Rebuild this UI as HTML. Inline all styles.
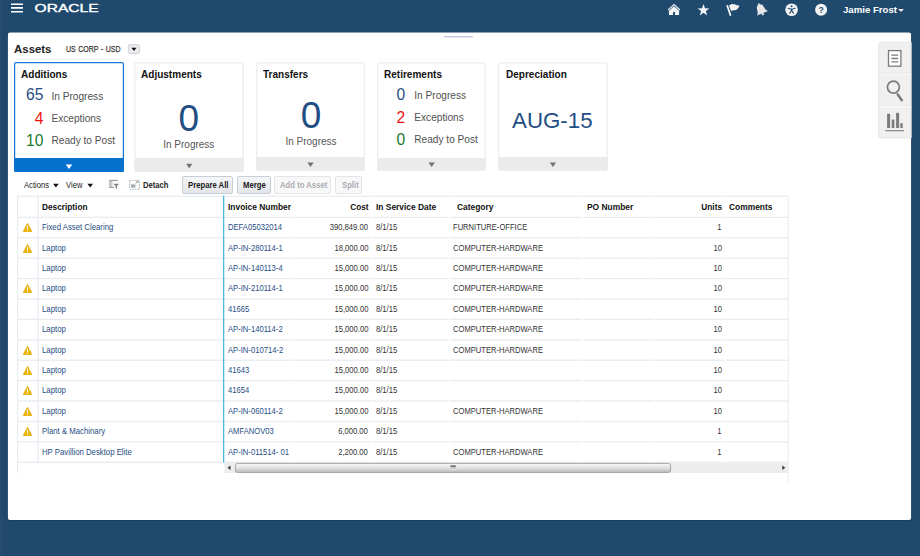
<!DOCTYPE html>
<html lang="en"><head><meta charset="utf-8"><title>Assets</title>
<style>
html,body{margin:0;padding:0;}
body{width:920px;height:556px;overflow:hidden;background:#1f4a6e;font-family:"Liberation Sans",sans-serif;position:relative;}
.b{position:absolute;display:block;}
.t{position:absolute;white-space:nowrap;}
</style></head><body>
<div class="b " style="left:0px;top:0px;width:1.5px;height:556px;background:#274c70;"></div>
<svg class="b" style="left:8px;top:0;width:20px;height:16px" viewBox="8 0 20 16"><path d="M11 3.4 H23 V5.1 H11 Z M11 7 H23 V8.7 H11 Z M11 10.9 H23 V12.6 H11 Z" fill="#fff"/></svg>
<svg class="b" style="left:30px;top:0;width:80px;height:16px" viewBox="0 0 80 16"><text x="4.6" y="11.5" font-family="Liberation Sans, sans-serif" font-size="11.2" fill="#fff" stroke="#fff" stroke-width="0.35" textLength="64" lengthAdjust="spacingAndGlyphs">ORACLE</text><text x="69" y="6" font-family="Liberation Sans, sans-serif" font-size="2.5" fill="#fff">®</text></svg>

<svg class="b" style="left:666.2px;top:2px;width:16px;height:16px" viewBox="0 0 16 16"><path d="M8 1.7 L14.3 7.6 L13.6 8.4 L8 3.2 L2.4 8.4 L1.7 7.6 Z" fill="#f2f4f6"/><path d="M2.9 8.8 L8 4.2 L13.1 8.8 V13 H9 V9.9 H7.1 V13 H2.9 Z" fill="#f2f4f6"/></svg>
<svg class="b" style="left:696px;top:2px;width:16px;height:16px" viewBox="0 0 16 16"><path d="M7.5 2.1 L9 6.3 L13.4 6.4 L9.9 9.1 L11.2 13.4 L7.5 10.8 L3.8 13.4 L5.1 9.1 L1.6 6.4 L6 6.3 Z" fill="#f2f4f6"/></svg>
<svg class="b" style="left:720px;top:0px;width:56px;height:20px" viewBox="720 0 56 20"><path d="M726.3 5.6 L727.9 5.0 L731.4 15.6 L729.8 16.1 Z" fill="#fff"/><path d="M729 5.6 C730.8 3.6 733.6 3.5 735.3 4.5 C736.8 5.4 738.3 5.8 739.5 5.5 C738.8 7.6 737.7 9.4 736 10 C734.4 10.6 732.8 9.9 731.2 11.3 Z" fill="#f4f4f4"/><g transform="translate(762.5,13.3) rotate(-22)"><circle cx="0" cy="-9.6" r="1" fill="#e6e6e6"/><path d="M0 -9.4 C2.9 -9.4 3.6 -6.8 3.8 -4.4 C4 -2 4.8 -1 6 0 L-6 0 C-4.8 -1 -4 -2 -3.8 -4.4 C-3.6 -6.8 -2.9 -9.4 0 -9.4 Z" fill="#e6e6e6"/><circle cx="0" cy="0.9" r="1.2" fill="#e6e6e6"/></g></svg>
<svg class="b" style="left:778px;top:0px;width:56px;height:20px" viewBox="778 0 56 20"><circle cx="791.6" cy="9.7" r="6.3" fill="#f1f3f5"/><circle cx="791.6" cy="6.3" r="0.95" fill="#1f4a6e"/><path d="M788.2 8.3 L791.6 9.5 L795 8.3" fill="none" stroke="#1f4a6e" stroke-width="1.15" stroke-linecap="round"/><path d="M791.6 9.2 V10.8 M789.7 13.3 L791.6 10.2 L793.5 13.3" fill="none" stroke="#1f4a6e" stroke-width="1.2" stroke-linecap="round" stroke-linejoin="round"/><circle cx="821.1" cy="9.8" r="6" fill="#f1f3f5"/><text x="821.1" y="12.9" text-anchor="middle" font-family="Liberation Sans, sans-serif" font-weight="700" font-size="8.6" fill="#1f4a6e">?</text></svg>

<div class="t " style="top:4px;font-size:9.65px;line-height:11px;color:#fff;font-weight:700;left:843px;">Jamie Frost</div>
<div class="b" style="left:898px;top:9.2px;width:0;height:0;border-left:3px solid transparent;border-right:3px solid transparent;border-top:3px solid #e8e8e8"></div>
<svg class="b" style="left:0;top:0;width:920px;height:556px" viewBox="0 0 920 556"><rect x="7.3" y="32" width="904.4" height="488.7" rx="2.4" fill="#173f64"/><rect x="7.9" y="32.6" width="903.2" height="487.5" rx="2" fill="#fff"/></svg>
<svg class="b" style="left:440px;top:33px;width:40px;height:8px" viewBox="440 33 40 8"><rect x="444.2" y="35.9" width="28.7" height="1.6" rx="0.5" fill="#c4cadc"/></svg>
<div class="t " style="top:43px;font-size:11.4px;line-height:12px;color:#222;font-weight:700;left:14.1px;">Assets</div>
<div class="t " style="top:44px;font-size:9px;line-height:10px;color:#3a3a3a;left:66.1px;transform:scaleX(0.775);transform-origin:left center;-webkit-text-stroke:0.25px #3a3a3a;word-spacing:0.8px;">US CORP - USD</div>
<svg class="b" style="left:120px;top:40px;width:30px;height:20px" viewBox="120 40 30 20"><rect x="128.3" y="44.6" width="11.3" height="8.9" rx="1.8" fill="#e9ebee" stroke="#c9ced4" stroke-width="0.9"/><path d="M131.4 47.7 H136.5 L133.95 50.9 Z" fill="#0a0a0a"/></svg>
<svg class="b" style="left:0;top:56px;width:620px;height:120px" viewBox="0 56 620 120"><rect x="14.6" y="62.67" width="108.8" height="108.63" rx="1.5" fill="#fff" stroke="#1874d6" stroke-width="1.25"/><path d="M14 158.0 H124 V170.4 Q124 171.9 122.5 171.9 H15.5 Q14 171.9 14 170.4 Z" fill="#0672ce"/><path d="M65.7 164.4 H72.3 L69.0 169.0 Z" fill="#fff"/><rect x="134.9" y="62.9" width="108.29999999999998" height="108.25" rx="1.2" fill="#fff" stroke="#e9e9e9" stroke-width="1"/><path d="M134.8 158.1 H243.29999999999998 V170.65 Q243.29999999999998 171.65 242.29999999999998 171.65 H135.8 Q134.8 171.65 134.8 170.65 Z" fill="#ebebeb"/><path d="M186.1 163.7 H192.4 L189.25 168.2 Z" fill="#6e7378"/><rect x="256.8" y="62.9" width="107.44999999999999" height="107.25" rx="1.2" fill="#fff" stroke="#e9e9e9" stroke-width="1"/><path d="M256.7 157.07 H364.35 V169.65 Q364.35 170.65 363.35 170.65 H257.7 Q256.7 170.65 256.7 169.65 Z" fill="#ebebeb"/><path d="M307.35 162.6 H313.65 L310.5 167.1 Z" fill="#6e7378"/><rect x="377.75" y="62.9" width="107.44999999999999" height="107.30" rx="1.2" fill="#fff" stroke="#e9e9e9" stroke-width="1"/><path d="M377.65 158.1 H485.3 V169.7 Q485.3 170.7 484.3 170.7 H378.65 Q377.65 170.7 377.65 169.7 Z" fill="#ebebeb"/><path d="M428.5 162.6 H434.79999999999995 L431.65 167.1 Z" fill="#6e7378"/><rect x="498.7" y="62.9" width="108.50000000000006" height="107.25" rx="1.2" fill="#fff" stroke="#e9e9e9" stroke-width="1"/><path d="M498.59999999999997 157.07 H607.3000000000001 V169.65 Q607.3000000000001 170.65 606.3000000000001 170.65 H499.59999999999997 Q498.59999999999997 170.65 498.59999999999997 169.65 Z" fill="#ebebeb"/><path d="M549.8000000000001 162.6 H556.1 L552.95 167.1 Z" fill="#6e7378"/></svg>
<div class="t " style="top:69px;font-size:10.2px;line-height:11px;color:#111;font-weight:700;left:21.0px;transform:scaleX(0.985);transform-origin:left center;">Additions</div>
<div class="t " style="top:69px;font-size:10.2px;line-height:11px;color:#111;font-weight:700;left:141.4px;transform:scaleX(0.985);transform-origin:left center;">Adjustments</div>
<div class="t " style="top:69px;font-size:10.2px;line-height:11px;color:#111;font-weight:700;left:263.3px;transform:scaleX(0.985);transform-origin:left center;">Transfers</div>
<div class="t " style="top:69px;font-size:10.2px;line-height:11px;color:#111;font-weight:700;left:384.25px;transform:scaleX(0.985);transform-origin:left center;">Retirements</div>
<div class="t " style="top:69px;font-size:10.2px;line-height:11px;color:#111;font-weight:700;left:506.2px;transform:scaleX(0.985);transform-origin:left center;">Depreciation</div>
<div class="t " style="top:86px;font-size:15.6px;line-height:17px;color:#1f4e83;right:876.60px;">65</div>
<div class="t " style="top:91px;font-size:10.12px;line-height:11px;color:#505050;left:51.5px;">In Progress</div>
<div class="t " style="top:110px;font-size:15.6px;line-height:17px;color:#ee1111;right:876.60px;">4</div>
<div class="t " style="top:113px;font-size:10.12px;line-height:11px;color:#505050;left:51.5px;">Exceptions</div>
<div class="t " style="top:132px;font-size:15.6px;line-height:17px;color:#1a7a2e;right:876.60px;">10</div>
<div class="t " style="top:135px;font-size:10.12px;line-height:11px;color:#505050;left:51.5px;">Ready to Post</div>
<div class="t " style="top:86px;font-size:15.6px;line-height:17px;color:#1f4e83;right:514.80px;">0</div>
<div class="t " style="top:90px;font-size:10.12px;line-height:11px;color:#505050;left:414.3px;">In Progress</div>
<div class="t " style="top:109px;font-size:15.6px;line-height:17px;color:#ee1111;right:514.80px;">2</div>
<div class="t " style="top:112px;font-size:10.12px;line-height:11px;color:#505050;left:414.3px;">Exceptions</div>
<div class="t " style="top:131px;font-size:15.6px;line-height:17px;color:#1a7a2e;right:514.80px;">0</div>
<div class="t " style="top:134px;font-size:10.12px;line-height:11px;color:#505050;left:414.3px;">Ready to Post</div>
<div class="t " style="top:98px;font-size:37px;line-height:41px;color:#1f4e83;left:88.80000000000001px;width:200px;text-align:center;">0</div>
<div class="t " style="top:139px;font-size:10px;line-height:11px;color:#555;left:88.80000000000001px;width:200px;text-align:center;">In Progress</div>
<div class="t " style="top:95px;font-size:37px;line-height:41px;color:#1f4e83;left:211px;width:200px;text-align:center;">0</div>
<div class="t " style="top:136px;font-size:10px;line-height:11px;color:#555;left:211px;width:200px;text-align:center;">In Progress</div>
<div class="t " style="top:108px;font-size:22.3px;line-height:25px;color:#1f4e83;left:452.29999999999995px;width:200px;text-align:center;">AUG-15</div>
<div class="t " style="top:180px;font-size:8.4px;line-height:10px;color:#222;left:23.8px;transform:scaleX(0.915);transform-origin:left center;">Actions</div>
<div class="t " style="top:180px;font-size:8.4px;line-height:10px;color:#222;left:66.4px;transform:scaleX(0.915);transform-origin:left center;">View</div>
<svg class="b" style="left:0;top:174px;width:180px;height:22px" viewBox="0 174 180 22"><path d="M53.1 183.7 H58.7 L55.9 187.5 Z M87.4 183.7 H93 L90.2 187.5 Z" fill="#111"/><path d="M109.6 180.4 H117.9 M109.9 180 V187.8 M109.6 187.4 H114.2" fill="none" stroke="#8c9196" stroke-width="1"/><rect x="110.3" y="180.9" width="2.2" height="6" fill="#c5c9cd"/><path d="M113.2 183.7 H119.2 L116.9 186 V189 L115.6 188.2 V186 Z" fill="#7e8388"/><rect x="129.7" y="180.4" width="9.7" height="8.9" fill="none" stroke="#a9aeb3" stroke-width="1" stroke-dasharray="1.5 1.2"/><rect x="131" y="184.4" width="4.4" height="3.2" fill="#a4a9ae"/><path d="M135.6 183.6 L137.8 181.4 M136.2 181.2 H138 V183" fill="none" stroke="#8c9196" stroke-width="0.8"/></svg>
<div class="t " style="top:180px;font-size:8.3px;line-height:10px;color:#222;font-weight:700;left:143.2px;transform:scaleX(0.915);transform-origin:left center;">Detach</div>
<div class="b " style="left:182.1px;top:176px;width:51px;height:18px;box-sizing:border-box;border:1px solid #c8ced5;border-radius:2px;background:linear-gradient(#f5f6f7,#e3e5e8);"></div>
<div class="t " style="top:180px;font-size:8.3px;line-height:10px;color:#1a1a1a;font-weight:700;left:188px;transform:scaleX(0.93);transform-origin:left center;">Prepare All</div>
<div class="b " style="left:237.3px;top:176px;width:33.4px;height:18px;box-sizing:border-box;border:1px solid #c8ced5;border-radius:2px;background:linear-gradient(#f5f6f7,#e3e5e8);"></div>
<div class="t " style="top:180px;font-size:8.3px;line-height:10px;color:#1a1a1a;font-weight:700;left:243px;transform:scaleX(0.93);transform-origin:left center;">Merge</div>
<div class="b " style="left:274.3px;top:176px;width:56.6px;height:18px;box-sizing:border-box;border:1px solid #e3e5e8;border-radius:2px;background:#f8f8f9;"></div>
<div class="t " style="top:180px;font-size:8.3px;line-height:10px;color:#a9acb0;font-weight:700;left:280.3px;transform:scaleX(0.93);transform-origin:left center;">Add to Asset</div>
<div class="b " style="left:335.1px;top:176px;width:26.8px;height:18px;box-sizing:border-box;border:1px solid #e3e5e8;border-radius:2px;background:#f8f8f9;"></div>
<div class="t " style="top:180px;font-size:8.3px;line-height:10px;color:#a9acb0;font-weight:700;left:341.7px;transform:scaleX(0.93);transform-origin:left center;">Split</div>
<svg class="b" style="left:0;top:190px;width:800px;height:300px" viewBox="0 190 800 300"><rect x="17" y="195.6" width="771.6" height="1.2" fill="#e7ecf1"/><rect x="17" y="216.70" width="771.6" height="1.3" fill="#e7ecf1"/><rect x="17" y="237.11" width="771.6" height="1.3" fill="#e7ecf1"/><rect x="17" y="257.52" width="771.6" height="1.3" fill="#e7ecf1"/><rect x="17" y="277.93" width="771.6" height="1.3" fill="#e7ecf1"/><rect x="17" y="298.34" width="771.6" height="1.3" fill="#e7ecf1"/><rect x="17" y="318.75" width="771.6" height="1.3" fill="#e7ecf1"/><rect x="17" y="339.16" width="771.6" height="1.3" fill="#e7ecf1"/><rect x="17" y="359.57" width="771.6" height="1.3" fill="#e7ecf1"/><rect x="17" y="379.98" width="771.6" height="1.3" fill="#e7ecf1"/><rect x="17" y="400.39" width="771.6" height="1.3" fill="#e7ecf1"/><rect x="17" y="420.80" width="771.6" height="1.3" fill="#e7ecf1"/><rect x="17" y="441.21" width="771.6" height="1.3" fill="#e7ecf1"/><rect x="17" y="461.62" width="771.6" height="1.3" fill="#e7ecf1"/><rect x="17" y="195.6" width="1.1" height="277.5" fill="#e7ecf1"/><rect x="787.8000000000001" y="195.6" width="1" height="287" fill="#e9eef2"/><rect x="37.5" y="195.6" width="1.3" height="267" fill="#e7ecf1"/><rect x="293.4" y="196.8" width="1.2" height="266" fill="#fff"/><rect x="370.7" y="196.8" width="1.2" height="266" fill="#fff"/><rect x="448.2" y="196.8" width="1.2" height="266" fill="#fff"/><rect x="582.4" y="196.8" width="1.2" height="266" fill="#fff"/><rect x="653.8" y="196.8" width="1.2" height="266" fill="#fff"/><rect x="724.4" y="196.8" width="1.2" height="266" fill="#fff"/><rect x="223" y="195.6" width="1.3" height="266.8" fill="#4cb6e2"/></svg>
<div class="t " style="top:202px;font-size:8.8px;line-height:10px;color:#111;font-weight:700;left:41.7px;transform:scaleX(0.94);transform-origin:left center;">Description</div>
<div class="t " style="top:202px;font-size:8.8px;line-height:10px;color:#111;font-weight:700;left:227.6px;transform:scaleX(0.955);transform-origin:left center;">Invoice Number</div>
<div class="t " style="top:202px;font-size:8.8px;line-height:10px;color:#111;font-weight:700;right:551.60px;transform:scaleX(0.94);transform-origin:right center;">Cost</div>
<div class="t " style="top:202px;font-size:8.8px;line-height:10px;color:#111;font-weight:700;left:375.8px;transform:scaleX(0.955);transform-origin:left center;">In Service Date</div>
<div class="t " style="top:202px;font-size:8.8px;line-height:10px;color:#111;font-weight:700;left:456.7px;transform:scaleX(0.955);transform-origin:left center;">Category</div>
<div class="t " style="top:202px;font-size:8.8px;line-height:10px;color:#111;font-weight:700;left:587.4px;transform:scaleX(0.955);transform-origin:left center;">PO Number</div>
<div class="t " style="top:202px;font-size:8.8px;line-height:10px;color:#111;font-weight:700;right:198.40px;transform:scaleX(0.94);transform-origin:right center;">Units</div>
<div class="t " style="top:202px;font-size:8.8px;line-height:10px;color:#111;font-weight:700;left:728.6px;transform:scaleX(0.955);transform-origin:left center;">Comments</div>
<svg class="b" style="left:22px;top:222px;width:11px;height:11px" viewBox="0 0 11 11"><path d="M5.55 1.4 L9.7 9.4 H1.4 Z" fill="#f0b400" stroke="#e3aa00" stroke-width="0.9" stroke-linejoin="round"/><rect x="5.05" y="3.5" width="1" height="3.9" fill="#fff"/><rect x="5.05" y="8" width="1" height="0.9" fill="#fff"/></svg>
<div class="t " style="top:223px;font-size:8.2px;line-height:9px;color:#1f4e83;left:41.7px;transform:scaleX(0.95);transform-origin:left center;">Fixed Asset Clearing</div>
<div class="t " style="top:223px;font-size:8.2px;line-height:9px;color:#1f4e83;left:227.6px;transform:scaleX(0.933);transform-origin:left center;">DEFA05032014</div>
<div class="t " style="top:223px;font-size:8.2px;line-height:9px;color:#333;right:551.80px;transform:scaleX(0.933);transform-origin:right center;">390,849.00</div>
<div class="t " style="top:223px;font-size:8.2px;line-height:9px;color:#333;left:375.8px;transform:scaleX(0.933);transform-origin:left center;">8/1/15</div>
<div class="t " style="top:223px;font-size:8.2px;line-height:9px;color:#333;left:452.8px;transform:scaleX(0.927);transform-origin:left center;">FURNITURE-OFFICE</div>
<div class="t " style="top:223px;font-size:8.2px;line-height:9px;color:#333;right:198.40px;transform:scaleX(0.933);transform-origin:right center;">1</div>
<svg class="b" style="left:22px;top:243px;width:11px;height:11px" viewBox="0 0 11 11"><path d="M5.55 1.4 L9.7 9.4 H1.4 Z" fill="#f0b400" stroke="#e3aa00" stroke-width="0.9" stroke-linejoin="round"/><rect x="5.05" y="3.5" width="1" height="3.9" fill="#fff"/><rect x="5.05" y="8" width="1" height="0.9" fill="#fff"/></svg>
<div class="t " style="top:244px;font-size:8.2px;line-height:9px;color:#1f4e83;left:41.7px;transform:scaleX(0.95);transform-origin:left center;">Laptop</div>
<div class="t " style="top:244px;font-size:8.2px;line-height:9px;color:#1f4e83;left:227.6px;transform:scaleX(0.933);transform-origin:left center;">AP-IN-280114-1</div>
<div class="t " style="top:244px;font-size:8.2px;line-height:9px;color:#333;right:551.80px;transform:scaleX(0.933);transform-origin:right center;">18,000.00</div>
<div class="t " style="top:244px;font-size:8.2px;line-height:9px;color:#333;left:375.8px;transform:scaleX(0.933);transform-origin:left center;">8/1/15</div>
<div class="t " style="top:244px;font-size:8.2px;line-height:9px;color:#333;left:452.8px;transform:scaleX(0.927);transform-origin:left center;">COMPUTER-HARDWARE</div>
<div class="t " style="top:244px;font-size:8.2px;line-height:9px;color:#333;right:198.40px;transform:scaleX(0.933);transform-origin:right center;">10</div>
<div class="t " style="top:264px;font-size:8.2px;line-height:9px;color:#1f4e83;left:41.7px;transform:scaleX(0.95);transform-origin:left center;">Laptop</div>
<div class="t " style="top:264px;font-size:8.2px;line-height:9px;color:#1f4e83;left:227.6px;transform:scaleX(0.933);transform-origin:left center;">AP-IN-140113-4</div>
<div class="t " style="top:264px;font-size:8.2px;line-height:9px;color:#333;right:551.80px;transform:scaleX(0.933);transform-origin:right center;">15,000.00</div>
<div class="t " style="top:264px;font-size:8.2px;line-height:9px;color:#333;left:375.8px;transform:scaleX(0.933);transform-origin:left center;">8/1/15</div>
<div class="t " style="top:264px;font-size:8.2px;line-height:9px;color:#333;left:452.8px;transform:scaleX(0.927);transform-origin:left center;">COMPUTER-HARDWARE</div>
<div class="t " style="top:264px;font-size:8.2px;line-height:9px;color:#333;right:198.40px;transform:scaleX(0.933);transform-origin:right center;">10</div>
<svg class="b" style="left:22px;top:283px;width:11px;height:11px" viewBox="0 0 11 11"><path d="M5.55 1.4 L9.7 9.4 H1.4 Z" fill="#f0b400" stroke="#e3aa00" stroke-width="0.9" stroke-linejoin="round"/><rect x="5.05" y="3.5" width="1" height="3.9" fill="#fff"/><rect x="5.05" y="8" width="1" height="0.9" fill="#fff"/></svg>
<div class="t " style="top:284px;font-size:8.2px;line-height:9px;color:#1f4e83;left:41.7px;transform:scaleX(0.95);transform-origin:left center;">Laptop</div>
<div class="t " style="top:284px;font-size:8.2px;line-height:9px;color:#1f4e83;left:227.6px;transform:scaleX(0.933);transform-origin:left center;">AP-IN-210114-1</div>
<div class="t " style="top:284px;font-size:8.2px;line-height:9px;color:#333;right:551.80px;transform:scaleX(0.933);transform-origin:right center;">15,000.00</div>
<div class="t " style="top:284px;font-size:8.2px;line-height:9px;color:#333;left:375.8px;transform:scaleX(0.933);transform-origin:left center;">8/1/15</div>
<div class="t " style="top:284px;font-size:8.2px;line-height:9px;color:#333;left:452.8px;transform:scaleX(0.927);transform-origin:left center;">COMPUTER-HARDWARE</div>
<div class="t " style="top:284px;font-size:8.2px;line-height:9px;color:#333;right:198.40px;transform:scaleX(0.933);transform-origin:right center;">10</div>
<div class="t " style="top:305px;font-size:8.2px;line-height:9px;color:#1f4e83;left:41.7px;transform:scaleX(0.95);transform-origin:left center;">Laptop</div>
<div class="t " style="top:305px;font-size:8.2px;line-height:9px;color:#1f4e83;left:227.6px;transform:scaleX(0.933);transform-origin:left center;">41665</div>
<div class="t " style="top:305px;font-size:8.2px;line-height:9px;color:#333;right:551.80px;transform:scaleX(0.933);transform-origin:right center;">15,000.00</div>
<div class="t " style="top:305px;font-size:8.2px;line-height:9px;color:#333;left:375.8px;transform:scaleX(0.933);transform-origin:left center;">8/1/15</div>
<div class="t " style="top:305px;font-size:8.2px;line-height:9px;color:#333;left:452.8px;transform:scaleX(0.927);transform-origin:left center;">COMPUTER-HARDWARE</div>
<div class="t " style="top:305px;font-size:8.2px;line-height:9px;color:#333;right:198.40px;transform:scaleX(0.933);transform-origin:right center;">10</div>
<div class="t " style="top:325px;font-size:8.2px;line-height:9px;color:#1f4e83;left:41.7px;transform:scaleX(0.95);transform-origin:left center;">Laptop</div>
<div class="t " style="top:325px;font-size:8.2px;line-height:9px;color:#1f4e83;left:227.6px;transform:scaleX(0.933);transform-origin:left center;">AP-IN-140114-2</div>
<div class="t " style="top:325px;font-size:8.2px;line-height:9px;color:#333;right:551.80px;transform:scaleX(0.933);transform-origin:right center;">15,000.00</div>
<div class="t " style="top:325px;font-size:8.2px;line-height:9px;color:#333;left:375.8px;transform:scaleX(0.933);transform-origin:left center;">8/1/15</div>
<div class="t " style="top:325px;font-size:8.2px;line-height:9px;color:#333;left:452.8px;transform:scaleX(0.927);transform-origin:left center;">COMPUTER-HARDWARE</div>
<div class="t " style="top:325px;font-size:8.2px;line-height:9px;color:#333;right:198.40px;transform:scaleX(0.933);transform-origin:right center;">10</div>
<svg class="b" style="left:22px;top:345px;width:11px;height:11px" viewBox="0 0 11 11"><path d="M5.55 1.4 L9.7 9.4 H1.4 Z" fill="#f0b400" stroke="#e3aa00" stroke-width="0.9" stroke-linejoin="round"/><rect x="5.05" y="3.5" width="1" height="3.9" fill="#fff"/><rect x="5.05" y="8" width="1" height="0.9" fill="#fff"/></svg>
<div class="t " style="top:346px;font-size:8.2px;line-height:9px;color:#1f4e83;left:41.7px;transform:scaleX(0.95);transform-origin:left center;">Laptop</div>
<div class="t " style="top:346px;font-size:8.2px;line-height:9px;color:#1f4e83;left:227.6px;transform:scaleX(0.933);transform-origin:left center;">AP-IN-010714-2</div>
<div class="t " style="top:346px;font-size:8.2px;line-height:9px;color:#333;right:551.80px;transform:scaleX(0.933);transform-origin:right center;">15,000.00</div>
<div class="t " style="top:346px;font-size:8.2px;line-height:9px;color:#333;left:375.8px;transform:scaleX(0.933);transform-origin:left center;">8/1/15</div>
<div class="t " style="top:346px;font-size:8.2px;line-height:9px;color:#333;left:452.8px;transform:scaleX(0.927);transform-origin:left center;">COMPUTER-HARDWARE</div>
<div class="t " style="top:346px;font-size:8.2px;line-height:9px;color:#333;right:198.40px;transform:scaleX(0.933);transform-origin:right center;">10</div>
<svg class="b" style="left:22px;top:365px;width:11px;height:11px" viewBox="0 0 11 11"><path d="M5.55 1.4 L9.7 9.4 H1.4 Z" fill="#f0b400" stroke="#e3aa00" stroke-width="0.9" stroke-linejoin="round"/><rect x="5.05" y="3.5" width="1" height="3.9" fill="#fff"/><rect x="5.05" y="8" width="1" height="0.9" fill="#fff"/></svg>
<div class="t " style="top:366px;font-size:8.2px;line-height:9px;color:#1f4e83;left:41.7px;transform:scaleX(0.95);transform-origin:left center;">Laptop</div>
<div class="t " style="top:366px;font-size:8.2px;line-height:9px;color:#1f4e83;left:227.6px;transform:scaleX(0.933);transform-origin:left center;">41643</div>
<div class="t " style="top:366px;font-size:8.2px;line-height:9px;color:#333;right:551.80px;transform:scaleX(0.933);transform-origin:right center;">15,000.00</div>
<div class="t " style="top:366px;font-size:8.2px;line-height:9px;color:#333;left:375.8px;transform:scaleX(0.933);transform-origin:left center;">8/1/15</div>
<div class="t " style="top:366px;font-size:8.2px;line-height:9px;color:#333;right:198.40px;transform:scaleX(0.933);transform-origin:right center;">10</div>
<svg class="b" style="left:22px;top:385px;width:11px;height:11px" viewBox="0 0 11 11"><path d="M5.55 1.4 L9.7 9.4 H1.4 Z" fill="#f0b400" stroke="#e3aa00" stroke-width="0.9" stroke-linejoin="round"/><rect x="5.05" y="3.5" width="1" height="3.9" fill="#fff"/><rect x="5.05" y="8" width="1" height="0.9" fill="#fff"/></svg>
<div class="t " style="top:386px;font-size:8.2px;line-height:9px;color:#1f4e83;left:41.7px;transform:scaleX(0.95);transform-origin:left center;">Laptop</div>
<div class="t " style="top:386px;font-size:8.2px;line-height:9px;color:#1f4e83;left:227.6px;transform:scaleX(0.933);transform-origin:left center;">41654</div>
<div class="t " style="top:386px;font-size:8.2px;line-height:9px;color:#333;right:551.80px;transform:scaleX(0.933);transform-origin:right center;">15,000.00</div>
<div class="t " style="top:386px;font-size:8.2px;line-height:9px;color:#333;left:375.8px;transform:scaleX(0.933);transform-origin:left center;">8/1/15</div>
<div class="t " style="top:386px;font-size:8.2px;line-height:9px;color:#333;right:198.40px;transform:scaleX(0.933);transform-origin:right center;">10</div>
<svg class="b" style="left:22px;top:406px;width:11px;height:11px" viewBox="0 0 11 11"><path d="M5.55 1.4 L9.7 9.4 H1.4 Z" fill="#f0b400" stroke="#e3aa00" stroke-width="0.9" stroke-linejoin="round"/><rect x="5.05" y="3.5" width="1" height="3.9" fill="#fff"/><rect x="5.05" y="8" width="1" height="0.9" fill="#fff"/></svg>
<div class="t " style="top:407px;font-size:8.2px;line-height:9px;color:#1f4e83;left:41.7px;transform:scaleX(0.95);transform-origin:left center;">Laptop</div>
<div class="t " style="top:407px;font-size:8.2px;line-height:9px;color:#1f4e83;left:227.6px;transform:scaleX(0.933);transform-origin:left center;">AP-IN-060114-2</div>
<div class="t " style="top:407px;font-size:8.2px;line-height:9px;color:#333;right:551.80px;transform:scaleX(0.933);transform-origin:right center;">15,000.00</div>
<div class="t " style="top:407px;font-size:8.2px;line-height:9px;color:#333;left:375.8px;transform:scaleX(0.933);transform-origin:left center;">8/1/15</div>
<div class="t " style="top:407px;font-size:8.2px;line-height:9px;color:#333;left:452.8px;transform:scaleX(0.927);transform-origin:left center;">COMPUTER-HARDWARE</div>
<div class="t " style="top:407px;font-size:8.2px;line-height:9px;color:#333;right:198.40px;transform:scaleX(0.933);transform-origin:right center;">10</div>
<svg class="b" style="left:22px;top:426px;width:11px;height:11px" viewBox="0 0 11 11"><path d="M5.55 1.4 L9.7 9.4 H1.4 Z" fill="#f0b400" stroke="#e3aa00" stroke-width="0.9" stroke-linejoin="round"/><rect x="5.05" y="3.5" width="1" height="3.9" fill="#fff"/><rect x="5.05" y="8" width="1" height="0.9" fill="#fff"/></svg>
<div class="t " style="top:427px;font-size:8.2px;line-height:9px;color:#1f4e83;left:41.7px;transform:scaleX(0.95);transform-origin:left center;">Plant &amp; Machinary</div>
<div class="t " style="top:427px;font-size:8.2px;line-height:9px;color:#1f4e83;left:227.6px;transform:scaleX(0.933);transform-origin:left center;">AMFANOV03</div>
<div class="t " style="top:427px;font-size:8.2px;line-height:9px;color:#333;right:551.80px;transform:scaleX(0.933);transform-origin:right center;">6,000.00</div>
<div class="t " style="top:427px;font-size:8.2px;line-height:9px;color:#333;left:375.8px;transform:scaleX(0.933);transform-origin:left center;">8/1/15</div>
<div class="t " style="top:427px;font-size:8.2px;line-height:9px;color:#333;right:198.40px;transform:scaleX(0.933);transform-origin:right center;">1</div>
<div class="t " style="top:448px;font-size:8.2px;line-height:9px;color:#1f4e83;left:41.7px;transform:scaleX(0.95);transform-origin:left center;">HP Pavillion Desktop Elite</div>
<div class="t " style="top:448px;font-size:8.2px;line-height:9px;color:#1f4e83;left:227.6px;transform:scaleX(0.933);transform-origin:left center;">AP-IN-011514- 01</div>
<div class="t " style="top:448px;font-size:8.2px;line-height:9px;color:#333;right:551.80px;transform:scaleX(0.933);transform-origin:right center;">2,200.00</div>
<div class="t " style="top:448px;font-size:8.2px;line-height:9px;color:#333;left:375.8px;transform:scaleX(0.933);transform-origin:left center;">8/1/15</div>
<div class="t " style="top:448px;font-size:8.2px;line-height:9px;color:#333;left:452.8px;transform:scaleX(0.927);transform-origin:left center;">COMPUTER-HARDWARE</div>
<div class="t " style="top:448px;font-size:8.2px;line-height:9px;color:#333;right:198.40px;transform:scaleX(0.933);transform-origin:right center;">1</div>
<svg class="b" style="left:220px;top:460px;width:572px;height:16px" viewBox="220 460 572 16"><defs><linearGradient id="sg" x1="0" y1="0" x2="0" y2="1"><stop offset="0" stop-color="#fafafa"/><stop offset="0.45" stop-color="#e4e4e4"/><stop offset="1" stop-color="#bcbcbc"/></linearGradient></defs><rect x="224.4" y="463" width="563.6" height="10" fill="#ededed"/><path d="M230.5 465.5 V469.9 L227.6 467.7 Z" fill="#333"/><path d="M782.3 465.5 V469.9 L785.2 467.7 Z" fill="#333"/><rect x="235.4" y="463.4" width="435.2" height="9" rx="2.2" fill="url(#sg)" stroke="#9c9c9c" stroke-width="0.9"/><rect x="449.8" y="464.8" width="6.6" height="4.8" fill="#f2f2f2"/><rect x="450.4" y="465.3" width="5.4" height="1.7" fill="#707070"/><rect x="450.4" y="467.5" width="5.4" height="1.3" fill="#b4b4b4"/></svg>
<svg class="b" style="left:870px;top:38px;width:44px;height:106px" viewBox="870 38 44 106"><path d="M911.2 42.4 H881 Q878.6 42.4 878.6 44.8 V135.6 Q878.6 138 881 138 H911.2 Z" fill="#f0f0f0" stroke="#e3e3e3" stroke-width="0.9"/><path d="M878.6 74.3 H911.2 M878.6 106.4 H911.2" stroke="#fbfbfb" stroke-width="1.6"/><path d="M878.6 73.4 H911.2 M878.6 105.5 H911.2" stroke="#e4e4e4" stroke-width="0.7"/><rect x="888.5" y="50.6" width="12.4" height="15.6" fill="#fff" stroke="#7b7b7b" stroke-width="1.3"/><path d="M891.4 55.2 H898.2 M891.4 58.5 H898.2 M891.4 61.8 H898.2" stroke="#7b7b7b" stroke-width="1.3"/><circle cx="893.4" cy="87.1" r="6" fill="none" stroke="#7b7b7b" stroke-width="1.7"/><path d="M897.6 94.3 L901.8 100.2" stroke="#7b7b7b" stroke-width="2.5" stroke-linecap="round"/></svg>
<svg class="b" style="left:880px;top:108px;width:30px;height:28px" viewBox="880 108 30 28"><path d="M885.2 130.7 H903.8" stroke="#7b7b7b" stroke-width="1.1"/><rect x="887.1" y="113.8" width="3" height="14.2" fill="#7b7b7b"/><rect x="891.7" y="119.6" width="2.7" height="8.4" fill="#7b7b7b"/><rect x="896.1" y="112.9" width="3" height="15.1" fill="#7b7b7b"/><rect x="900.3" y="123.2" width="2.4" height="4.8" fill="#7b7b7b"/></svg>
</body></html>
